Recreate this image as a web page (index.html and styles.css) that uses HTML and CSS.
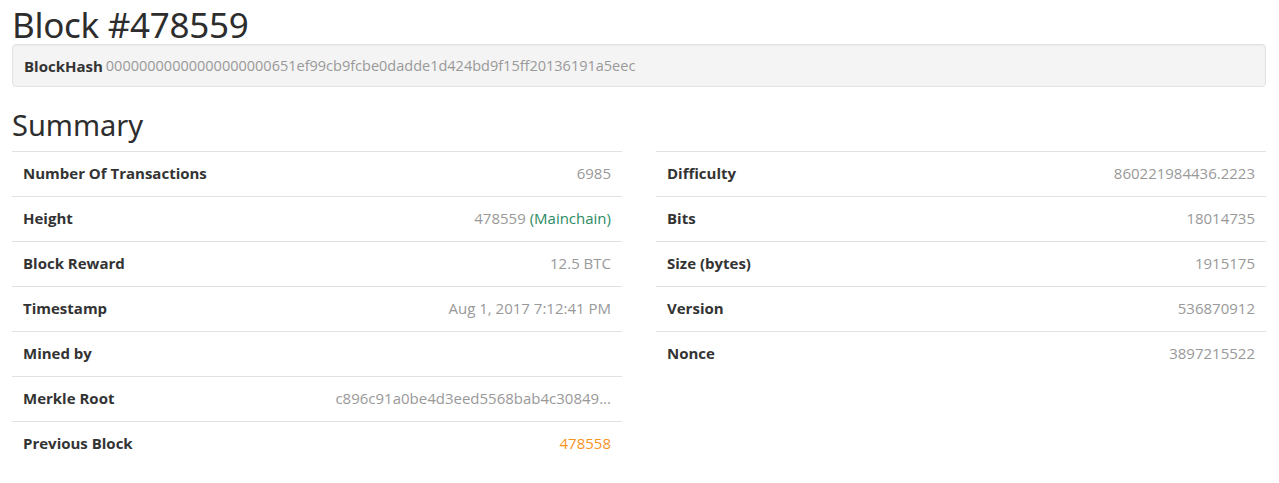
FILE: index.html
```html
<!DOCTYPE html>
<html>
<head>
<meta charset="utf-8">
<link rel="stylesheet" href="styles.css">
</head>
<body>
<div class="page">
  <h1 class="title">Block #478559</h1>
  <div class="well">
    <strong class="well-label">BlockHash</strong>
    <span class="hash">00000000000000000000651ef99cb9fcbe0dadde1d424bd9f15ff20136191a5eec</span>
  </div>
  <h2 class="subtitle">Summary</h2>
  <div class="cols">
    <table class="tbl">
      <tr><td class="k">Number Of Transactions</td><td class="v">6985</td></tr>
      <tr><td class="k">Height</td><td class="v">478559 <span class="main">(Mainchain)</span></td></tr>
      <tr><td class="k">Block Reward</td><td class="v">12.5 BTC</td></tr>
      <tr><td class="k">Timestamp</td><td class="v">Aug 1, 2017 7:12:41 PM</td></tr>
      <tr><td class="k">Mined by</td><td class="v"></td></tr>
      <tr><td class="k">Merkle Root</td><td class="v">c896c91a0be4d3eed5568bab4c30849...</td></tr>
      <tr><td class="k">Previous Block</td><td class="v"><span class="link">478558</span></td></tr>
    </table>
    <table class="tbl">
      <tr><td class="k">Difficulty</td><td class="v">860221984436.2223</td></tr>
      <tr><td class="k">Bits</td><td class="v">18014735</td></tr>
      <tr><td class="k">Size (bytes)</td><td class="v">1915175</td></tr>
      <tr><td class="k">Version</td><td class="v">536870912</td></tr>
      <tr><td class="k">Nonce</td><td class="v">3897215522</td></tr>
    </table>
  </div>
</div>
</body>
</html>
```
FILE: styles.css
```css
html, body {
  margin: 0;
  padding: 0;
  background: #fff;
}
body {
  font-family: "Open Sans", "Noto Sans", sans-serif;
  font-size: 15px;
  color: #333;
}
.page {
  padding: 0 13px 0 12px;
}
.title {
  font-family: "Noto Sans", "Open Sans", sans-serif;
  font-weight: 400;
  font-size: 35px;
  line-height: 40px;
  margin: 5px 0 0 0;
  color: #2d2d2d;
  letter-spacing: -0.3px;
}
.well {
  margin-top: -1px;
  box-sizing: border-box;
  height: 43px;
  background: #f4f4f4;
  border: 1px solid #e3e3e3;
  border-radius: 4px;
  box-shadow: inset 0 1px 1px rgba(0,0,0,0.04);
  display: flex;
  align-items: center;
  padding: 0 11px;
}
.well-label {
  font-weight: 700;
  color: #333;
  margin-right: 3px;
}
.hash {
  color: #999;
  font-size: 14.5px;
}
.subtitle {
  font-family: "Noto Sans", "Open Sans", sans-serif;
  font-weight: 400;
  font-size: 29px;
  line-height: 36px;
  margin: 20px 0 0 0;
  color: #2d2d2d;
}
.cols {
  display: grid;
  grid-template-columns: 610px 610px;
  column-gap: 34px;
  margin-top: 8px;
  align-items: start;
}
.tbl {
  width: 100%;
  border-collapse: collapse;
}
.tbl td {
  border-top: 1px solid #e2e2e2;
  height: 42px;
  padding: 0 11px 2px 11px;
  vertical-align: middle;
  line-height: 20px;
}
.k {
  font-weight: 700;
  color: #333;
  white-space: nowrap;
}
.v {
  text-align: right;
  color: #999;
  white-space: nowrap;
}
.main {
  color: #2c8a63;
}
.link {
  color: #f7941d;
}
```
